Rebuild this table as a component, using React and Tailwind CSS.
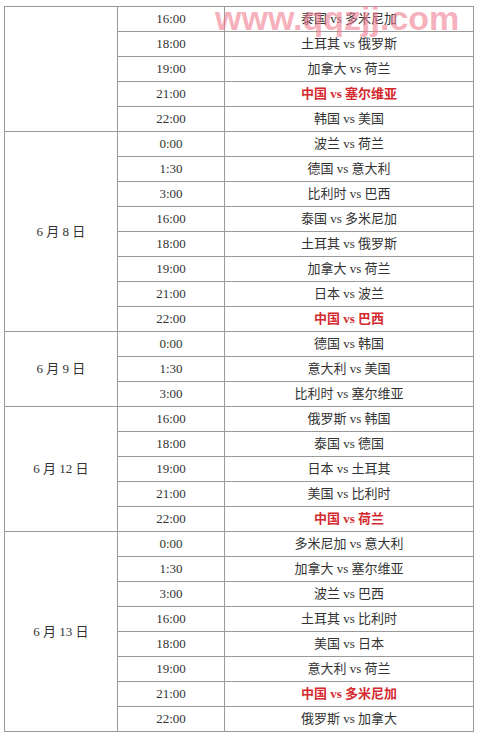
import React from 'react';

const days = [
  {
    date: '',
    games: [
      ['16:00', '泰国 vs 多米尼加'],
      ['18:00', '土耳其 vs 俄罗斯'],
      ['19:00', '加拿大 vs 荷兰'],
      ['21:00', '中国 vs 塞尔维亚', true],
      ['22:00', '韩国 vs 美国'],
    ],
  },
  {
    date: '6 月 8 日',
    games: [
      ['0:00', '波兰 vs 荷兰'],
      ['1:30', '德国 vs 意大利'],
      ['3:00', '比利时 vs 巴西'],
      ['16:00', '泰国 vs 多米尼加'],
      ['18:00', '土耳其 vs 俄罗斯'],
      ['19:00', '加拿大 vs 荷兰'],
      ['21:00', '日本 vs 波兰'],
      ['22:00', '中国 vs 巴西', true],
    ],
  },
  {
    date: '6 月 9 日',
    games: [
      ['0:00', '德国 vs 韩国'],
      ['1:30', '意大利 vs 美国'],
      ['3:00', '比利时 vs 塞尔维亚'],
    ],
  },
  {
    date: '6 月 12 日',
    games: [
      ['16:00', '俄罗斯 vs 韩国'],
      ['18:00', '泰国 vs 德国'],
      ['19:00', '日本 vs 土耳其'],
      ['21:00', '美国 vs 比利时'],
      ['22:00', '中国 vs 荷兰', true],
    ],
  },
  {
    date: '6 月 13 日',
    games: [
      ['0:00', '多米尼加 vs 意大利'],
      ['1:30', '加拿大 vs 塞尔维亚'],
      ['3:00', '波兰 vs 巴西'],
      ['16:00', '土耳其 vs 比利时'],
      ['18:00', '美国 vs 日本'],
      ['19:00', '意大利 vs 荷兰'],
      ['21:00', '中国 vs 多米尼加', true],
      ['22:00', '俄罗斯 vs 加拿大'],
    ],
  },
];

const cell = 'border border-[#9a9a9a] p-0 text-center align-middle h-[25px]';

export default function App() {
  return (
    <div className="relative w-[479px] h-[737px] bg-white overflow-hidden pt-[6px] pl-[4px] text-[13px] text-[#333] [font-family:'Liberation_Serif','Noto_Sans_CJK_SC',serif]">
      <table className="border-collapse w-[470px] table-fixed">
        <colgroup>
          <col className="w-[113px]" />
          <col className="w-[107px]" />
          <col />
        </colgroup>
        <tbody>
          {days.map((day) =>
            day.games.map(([time, match, china], i) => (
              <tr key={day.date + time}>
                {i === 0 && (
                  <td rowSpan={day.games.length} className={cell}>
                    {day.date}
                  </td>
                )}
                <td className={cell}>{time}</td>
                <td className={cell}>
                  {china ? (
                    <span className="font-bold text-[#d42a2f]">{match}</span>
                  ) : (
                    match
                  )}
                </td>
              </tr>
            ))
          )}
        </tbody>
      </table>

      {/* watermark */}
      <div className="absolute left-[215px] top-[1px] text-[34px] font-bold leading-none text-[#f07c90]/60 [font-family:'Liberation_Sans',sans-serif] pointer-events-none whitespace-nowrap">
        www.qqzjj.com
      </div>
    </div>
  );
}
